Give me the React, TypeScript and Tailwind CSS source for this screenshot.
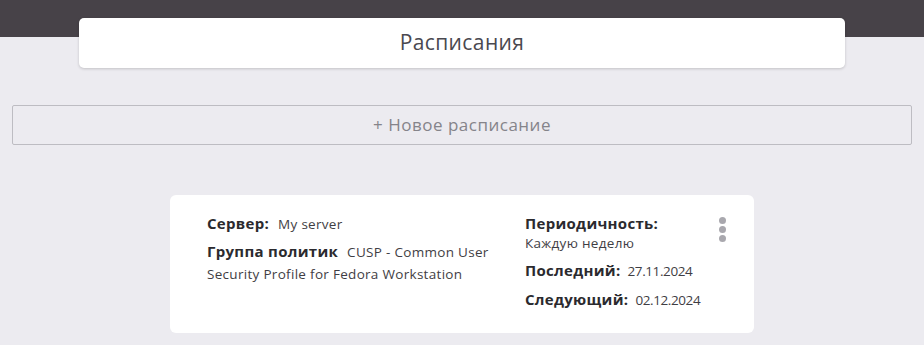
import React from 'react';

const font = { fontFamily: '"Open Sans", "Liberation Sans", sans-serif' };

function Field({ label, value, dense }: { label: string; value: string; dense?: boolean }) {
  return (
    <p className="leading-[21px]">
      <span className={`text-[15px] font-bold tracking-[0.3px] text-[#2b2a2e] ${dense ? 'mr-[7px]' : 'mr-[9px]'}`}>{label}</span>
      <span className={`text-[13.5px] text-[#3f3e44] ${dense ? 'tracking-[-0.4px]' : 'tracking-[0.3px]'}`}>{value}</span>
    </p>
  );
}

export default function App() {
  return (
    <div className="min-h-[345px] bg-[#ecebf0]" style={font}>
      {/* top bar */}
      <div className="h-[37px] bg-[#474248]" />
      <div className="px-[12px]">
        <div className="mx-auto -mt-[19px] flex h-[50px] w-[766px] items-center justify-center rounded-[5px] bg-white shadow-[0_1px_3px_rgba(0,0,0,0.18)]">
          <h1 className="text-[21px] font-normal tracking-[0.4px] text-[#4a4950]">Расписания</h1>
        </div>

        <button className="mt-[37px] flex h-[40px] w-full items-center justify-center rounded-[2px] border border-[#bdbcc2] text-[17px] tracking-[0.5px] text-[#85848a]">
          + Новое расписание
        </button>

        {/* schedule card */}
        <div className="mx-auto mt-[50px] flex w-[584px] rounded-[6px] bg-white pb-[22px] pl-[37px] pr-[28px] pt-[18px]">
          <div className="w-[300px] space-y-[6px]">
            <Field label="Сервер:" value="My server" />
            <Field label="Группа политик" value="CUSP - Common User Security Profile for Fedora Workstation" />
          </div>
          <div className="ml-[18px] flex-1 space-y-[7px]">
            <div className="leading-[20px]">
              <p className="text-[15px] font-bold tracking-[0.3px] text-[#2b2a2e]">Периодичность:</p>
              <p className="text-[13.5px] tracking-[0.3px] text-[#3f3e44]">Каждую неделю</p>
            </div>
            <Field label="Последний:" value="27.11.2024" dense />
            <Field label="Следующий:" value="02.12.2024" dense />
          </div>
          <div className="flex flex-col items-center gap-[2px] pt-[4px]">
            <span className="h-[7px] w-[7px] rounded-full bg-[#a9a8ae]" />
            <span className="h-[7px] w-[7px] rounded-full bg-[#a9a8ae]" />
            <span className="h-[7px] w-[7px] rounded-full bg-[#a9a8ae]" />
          </div>
        </div>
      </div>
    </div>
  );
}
